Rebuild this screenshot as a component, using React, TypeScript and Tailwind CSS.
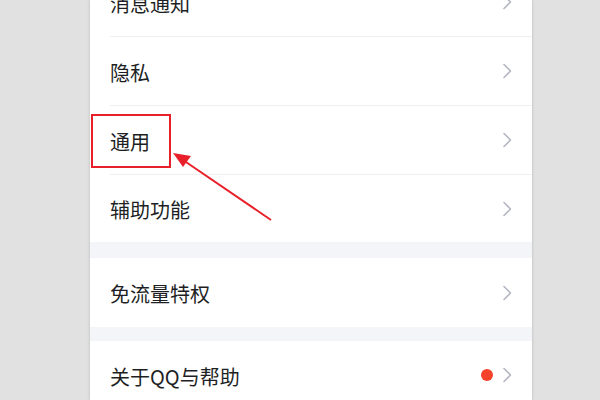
import React from 'react';

const Chevron = () => (
  <svg width="10" height="16" viewBox="0 0 10 16" fill="none" className="shrink-0">
    <path d="M2 1.5 L8.5 8 L2 14.5" stroke="#b4b6c2" strokeWidth="1.6" strokeLinecap="round" strokeLinejoin="round" />
  </svg>
);

const Row = ({ label, divider = true, dot = false, h = 'h-[68px]' }: { label: string; divider?: boolean; dot?: boolean; h?: string }) => (
  <div className={`${h} pl-5 flex flex-col`}>
    <div className="flex-1 flex items-center pr-[20px]">
      <span className="flex-1 text-[20px] text-[#1e1f24] leading-none pt-[3px]">{label}</span>
      {dot && <span className="w-[12px] h-[12px] rounded-full bg-[#f5422a] mr-[9px]" />}
      <Chevron />
    </div>
    {divider && <div className="h-px bg-[#eeeff3]" />}
  </div>
);

export default function App() {
  return (
    <div
      className="w-[600px] h-[400px] bg-[#e1e1e1] overflow-hidden pl-[90px] relative"
      style={{ fontFamily: '"Noto Sans CJK SC", "Noto Sans", sans-serif' }}
    >
      <div className="w-[442px] h-[400px] bg-white overflow-hidden shadow-[0_0_3px_rgba(0,0,0,0.18)]">
        <div className="-mt-[32px]">
          <Row label="消息通知" h="h-[69px]" />
          <Row label="隐私" h="h-[69px]" />
          <Row label="通用" h="h-[69px]" />
          <Row label="辅助功能" divider={false} h="h-[67px]" />
          <div className="h-[16px] bg-[#f4f5f8]" />
          <Row label="免流量特权" divider={false} h="h-[69px]" />
          <div className="h-[14px] bg-[#f4f5f8]" />
          <Row label="关于QQ与帮助" dot divider={false} h="h-[68px]" />
        </div>
      </div>

      {/* annotation */}
      <div className="absolute left-[91px] top-[114px] w-[80px] h-[54px] border-2 border-[#e8202a]" />
      <svg className="absolute left-0 top-0" width="600" height="400" viewBox="0 0 600 400">
        <line x1="271" y1="220" x2="183" y2="160" stroke="#e8202a" strokeWidth="2" />
        <polygon points="173,153 191,156 183,167" fill="#e8202a" />
      </svg>
    </div>
  );
}
